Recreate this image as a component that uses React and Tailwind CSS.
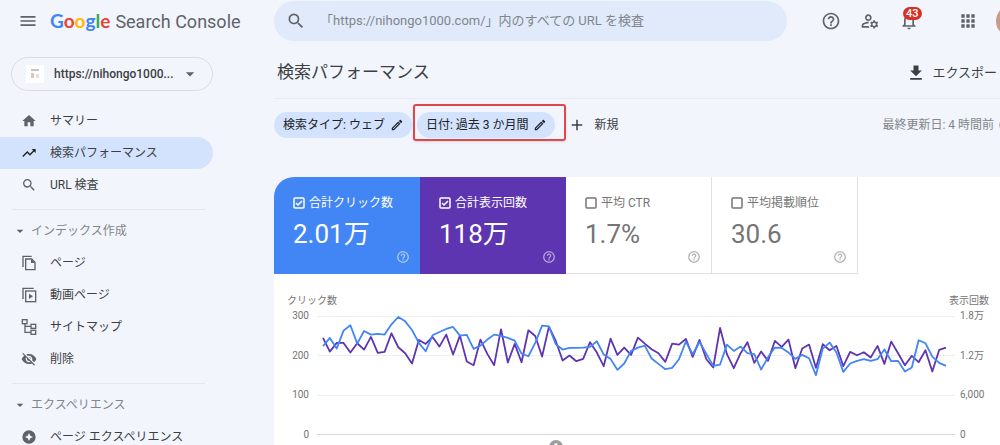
import { useState } from "react";
import {
  MdMenu, MdSearch, MdHelpOutline, MdOutlineManageAccounts, MdOutlineNotifications, MdApps,
  MdArrowDropDown, MdHome, MdTrendingUp, MdVisibilityOff, MdOutlineEdit, MdAdd, MdFileDownload,
} from "react-icons/md";

const PagesIcon = (props) => (
  <svg viewBox="0 0 24 24" fill="none" stroke="currentColor" strokeWidth="2" {...props}>
    <path d="M3 18V2h13" />
    <path d="M7 6h9l5 5v11H7z" />
    <path d="M15 6v6h6z" fill="currentColor" stroke="none" />
  </svg>
);

const VideoPagesIcon = (props) => (
  <svg viewBox="0 0 24 24" fill="none" stroke="currentColor" strokeWidth="2" {...props}>
    <path d="M3 18V2h16" />
    <rect x="7" y="6" width="15" height="16" />
    <path d="M12 10v8l6-4z" fill="currentColor" stroke="none" />
  </svg>
);

const SitemapIcon = (props) => (
  <svg viewBox="0 0 24 24" fill="none" stroke="currentColor" strokeWidth="2" {...props}>
    <rect x="2" y="1" width="7" height="6" />
    <rect x="15" y="8" width="7" height="6" />
    <rect x="15" y="17" width="7" height="6" />
    <path d="M6 7v13h9M6 11h9" />
  </svg>
);

const ExperienceIcon = (props) => (
  <svg viewBox="0 0 24 24" fill="currentColor" {...props}>
    <path
      fillRule="evenodd"
      d="M12 2a10 10 0 1 0 0 20 10 10 0 0 0 0-20zm0 4 2 4 4 2-4 2-2 4-2-4-4-2 4-2z"
    />
  </svg>
);

const mainNav = [
  { label: "サマリー", icon: MdHome },
  { label: "検索パフォーマンス", icon: MdTrendingUp, active: true },
  { label: "URL 検査", icon: MdSearch },
];

const indexNav = [
  { label: "ページ", icon: PagesIcon },
  { label: "動画ページ", icon: VideoPagesIcon },
  { label: "サイトマップ", icon: SitemapIcon },
  { label: "削除", icon: MdVisibilityOff },
];

const experienceNav = [{ label: "ページ エクスペリエンス", icon: ExperienceIcon }];

const metrics = [
  { id: "clicks", label: "合計クリック数", value: "2.01万", on: "bg-[#4285f4]" },
  { id: "impressions", label: "合計表示回数", value: "118万", on: "bg-[#5e35b1]" },
  { id: "ctr", label: "平均 CTR", value: "1.7%", on: "bg-[#00897b]" },
  { id: "position", label: "平均掲載順位", value: "30.6", on: "bg-[#e8710a]" },
];

// Daily series, as distance from the top of the chart (92 = axis maximum, 450 = zero)
const clicksLine = [
  183, 158, 190, 136, 120, 175, 137, 148, 146, 148, 117, 95, 108, 134, 173, 198, 150, 140, 131, 125,
  151, 149, 191, 181, 163, 148, 152, 158, 166, 205, 213, 173, 121, 123, 177, 193, 188, 188, 187, 185,
  168, 208, 221, 254, 235, 197, 187, 181, 220, 236, 252, 248, 222, 169, 207, 170, 206, 242, 238, 178,
  197, 184, 204, 207, 253, 216, 187, 188, 202, 221, 209, 219, 270, 190, 172, 202, 260, 235, 227, 222,
  227, 222, 193, 228, 227, 259, 247, 165, 174, 214, 233, 242,
];

const impressionsLine = [
  158, 199, 173, 173, 202, 174, 193, 155, 203, 200, 144, 186, 204, 235, 164, 176, 155, 184, 148, 208,
  151, 229, 240, 163, 206, 240, 132, 232, 176, 231, 135, 152, 214, 124, 167, 226, 211, 228, 221, 171,
  202, 243, 160, 209, 187, 209, 157, 175, 192, 204, 230, 175, 178, 161, 215, 164, 222, 247, 128, 207,
  249, 204, 171, 233, 199, 227, 167, 185, 163, 249, 190, 178, 248, 177, 195, 182, 243, 200, 210, 201,
  217, 182, 236, 169, 204, 240, 212, 231, 195, 259, 194, 187,
];

const toPoints = (line) => line.map((y, x) => `${x},${y}`).join(" ");

const NavItem = ({ label, icon: Icon, active }) => (
  <a
    href="#"
    className={`flex h-8 items-center gap-[13px] rounded-r-full pl-[21px] ${
      active ? "bg-[#d3e3fd] text-[#202124]" : "text-[#5f6368]"
    }`}
  >
    <Icon className="size-4 shrink-0" />
    <span className="text-[12px] text-[#3c4043]">{label}</span>
  </a>
);

const NavGroup = ({ title, items }) => (
  <>
    <div className="mt-2 mb-[5px] ml-3 mr-2 h-px bg-[#e3e7ee]" />
    <button className="flex h-8 items-center gap-[3px] pl-3 text-[12px] text-[#80868b]">
      <MdArrowDropDown className="size-4 text-[#5f6368]" />
      {title}
    </button>
    {items.map((item) => (
      <NavItem key={item.label} {...item} />
    ))}
  </>
);

const Sidebar = () => (
  <nav className="flex w-[213px] shrink-0 flex-col pt-[15px]">
    <button className="mb-[14px] ml-[11px] flex h-[34px] items-center rounded-full border border-[#dadce0] pl-[14px] text-[12px] font-medium text-[#3c4043]">
      <span className="flex size-[18px] items-center justify-center bg-white">
        <svg viewBox="0 0 18 18" className="size-[18px]">
          <path d="M5 5h8" stroke="#8a8a90" />
          <path d="M5 8h3v5H5z" fill="#dcc8ba" />
          <path d="M10 9h3v4h-3z" fill="#e6dde0" />
        </svg>
      </span>
      <span className="ml-[10px]">https://nihongo1000...</span>
      <MdArrowDropDown className="ml-[6px] size-5 text-[#5f6368]" />
    </button>
    {mainNav.map((item) => (
      <NavItem key={item.label} {...item} />
    ))}
    <NavGroup title="インデックス作成" items={indexNav} />
    <NavGroup title="エクスペリエンス" items={experienceNav} />
  </nav>
);

const Header = () => (
  <header className="flex h-[42px] items-center text-[#5f6368]">
    <div className="flex w-[274px] shrink-0 items-center pl-[18px]">
      <button aria-label="メニュー">
        <MdMenu className="size-5" />
      </button>
      <a href="#" className="ml-3 flex items-baseline gap-[5px] whitespace-nowrap text-[18px]">
        <span className="font-['Lato'] text-[19px] font-bold">
          <span className="text-[#4285f4]">G</span>
          <span className="text-[#ea4335]">o</span>
          <span className="text-[#fbbc04]">o</span>
          <span className="text-[#4285f4]">g</span>
          <span className="text-[#34a853]">l</span>
          <span className="text-[#ea4335]">e</span>
        </span>
        <span>Search Console</span>
      </a>
    </div>
    <label className="flex h-10 min-w-0 flex-1 items-center rounded-full bg-[#e1eafb] pl-3">
      <MdSearch className="size-5 shrink-0" />
      <input
        aria-label="URL 検査"
        placeholder="「https://nihongo1000.com/」内のすべての URL を検査"
        className="ml-[14px] min-w-0 flex-1 bg-transparent text-[13px] outline-none placeholder:text-[#80868b]"
      />
    </label>
    <div className="-mr-7 ml-[34px] flex shrink-0 items-center">
      <button aria-label="ヘルプ">
        <MdHelpOutline className="size-5" />
      </button>
      <button aria-label="ユーザー設定" className="ml-[19px]">
        <MdOutlineManageAccounts className="size-5" />
      </button>
      <button aria-label="通知" className="relative ml-[19px]">
        <MdOutlineNotifications className="size-5" />
        <span className="absolute -top-1 left-1 rounded-full bg-[#d93025] px-[3px] text-[11px] leading-[13px] font-medium text-white">
          43
        </span>
      </button>
      <button aria-label="アプリ" className="ml-[39px]">
        <MdApps className="size-5" />
      </button>
      <button aria-label="アカウント" className="ml-[18px] size-8 rounded-full bg-[#c99b86]" />
    </div>
  </header>
);

const FilterChip = ({ children }) => (
  <button className="flex h-[26px] items-center gap-[5px] rounded-full bg-[#d3e3fd] pr-2 pl-[9px] text-[12px] text-[#202124]">
    {children}
    <MdOutlineEdit className="size-[14px]" />
  </button>
);

const Metric = ({ label, value, on, checked, onToggle }) => (
  <div
    className={`flex h-[97px] w-[146px] flex-col pt-[18px] pl-[19px] ${
      checked ? `${on} text-white` : "border-r border-b border-[#e0e0e0] text-[#757575]"
    }`}
  >
    <label className="flex h-4 items-center gap-1 text-[12px] whitespace-nowrap">
      <input type="checkbox" checked={checked} onChange={onToggle} className="sr-only" />
      <svg viewBox="0 0 12 12" className="size-3 shrink-0" fill="none" stroke="currentColor" strokeWidth="1.5">
        <rect x="1" y="1" width="10" height="10" rx="1" />
        {checked && <path d="m3 6 2 2 4-4" />}
      </svg>
      {label}
    </label>
    <div className="mt-[5px] text-[26px] leading-9">{value}</div>
    <button aria-label={`${label}のヘルプ`} className="-mt-[2px] mr-[10px] self-end opacity-60">
      <MdHelpOutline className="size-[14px]" />
    </button>
  </div>
);

const Chart = () => (
  <div className="pt-5 pr-2 pl-[13px] text-[10px] leading-[14px] text-[#757575]">
    <div className="flex justify-between pr-[3px]">
      <span>クリック数</span>
      <span>表示回数</span>
    </div>
    <div className="mt-px flex gap-2">
      <div className="flex h-[133px] w-[22px] flex-col justify-between text-right">
        <span>300</span>
        <span>200</span>
        <span>100</span>
        <span>0</span>
      </div>
      <div className="grid h-[119px] flex-1 self-center">
        <div className="col-start-1 row-start-1 flex flex-col justify-between">
          <div className="h-px bg-[#eeeeee]" />
          <div className="h-px bg-[#eeeeee]" />
          <div className="h-px bg-[#eeeeee]" />
          <div className="h-px bg-[#dadada]" />
        </div>
        <div className="col-start-1 row-start-1 h-[119px] pr-[9px] pl-[6px]">
          <svg
            viewBox="0 92 91 358"
            preserveAspectRatio="none"
            className="size-full overflow-visible"
            fill="none"
            strokeWidth="1.8"
            strokeLinejoin="round"
          >
            <polyline points={toPoints(impressionsLine)} stroke="#5e35b1" vectorEffect="non-scaling-stroke" />
            <polyline points={toPoints(clicksLine)} stroke="#4285f4" vectorEffect="non-scaling-stroke" />
          </svg>
        </div>
      </div>
      <div className="-ml-[3px] flex h-[133px] w-8 flex-col justify-between">
        <span>1.8万</span>
        <span>1.2万</span>
        <span>6,000</span>
        <span>0</span>
      </div>
    </div>
    <div className="-mt-[2px] ml-[262px] flex size-[14px] items-center justify-center rounded-full bg-[#9e9e9e] text-[9px] font-bold text-white">
      1
    </div>
  </div>
);

const Performance = () => {
  const [selected, setSelected] = useState(["clicks", "impressions"]);

  const toggle = (id) => {
    setSelected((prev) => (prev.includes(id) ? prev.filter((m) => m !== id) : [...prev, id]));
  };

  return (
    <main className="ml-[61px] min-w-0 flex-1">
      <div className="flex h-[57px] items-center justify-between border-b border-[#e8ebf0] pt-[5px] pl-[3px]">
        <h1 className="text-[17px] text-[#3c4043]">検索パフォーマンス</h1>
        <button className="flex items-center gap-[6px] pr-[3px] text-[13px] text-[#3c4043]">
          <MdFileDownload className="size-5" />
          エクスポー
        </button>
      </div>

      <div className="mt-[13px] flex h-[26px] items-center whitespace-nowrap">
        <FilterChip>検索タイプ: ウェブ</FilterChip>
        <div className="relative ml-[5px]">
          <FilterChip>日付: 過去 3 か月間</FilterChip>
          <div className="pointer-events-none absolute -top-2 -right-[11px] -bottom-[3px] -left-1 rounded-[3px] border-2 border-[#e0474c] shadow" />
        </div>
        <button className="ml-[13px] flex items-center gap-2 text-[12px] text-[#3c4043]">
          <MdAdd className="size-[18px]" />
          新規
        </button>
        <div className="-mr-3 ml-auto flex items-center gap-1 text-[12px] text-[#80868b]">
          最終更新日: 4 時間前
          <MdHelpOutline className="size-[14px] text-[#b5a58a]" />
        </div>
      </div>

      <section className="mt-[39px] overflow-hidden rounded-tl-[20px] bg-white">
        <div className="flex">
          {metrics.map((m) => (
            <Metric key={m.id} {...m} checked={selected.includes(m.id)} onToggle={() => toggle(m.id)} />
          ))}
        </div>
        <Chart />
      </section>
    </main>
  );
};

export default function App() {
  return (
    <div className="h-screen overflow-hidden bg-[#f2f5fc] font-['Roboto','Noto_Sans_CJK_JP',sans-serif]">
      <Header />
      <div className="flex">
        <Sidebar />
        <Performance />
      </div>
    </div>
  );
}
